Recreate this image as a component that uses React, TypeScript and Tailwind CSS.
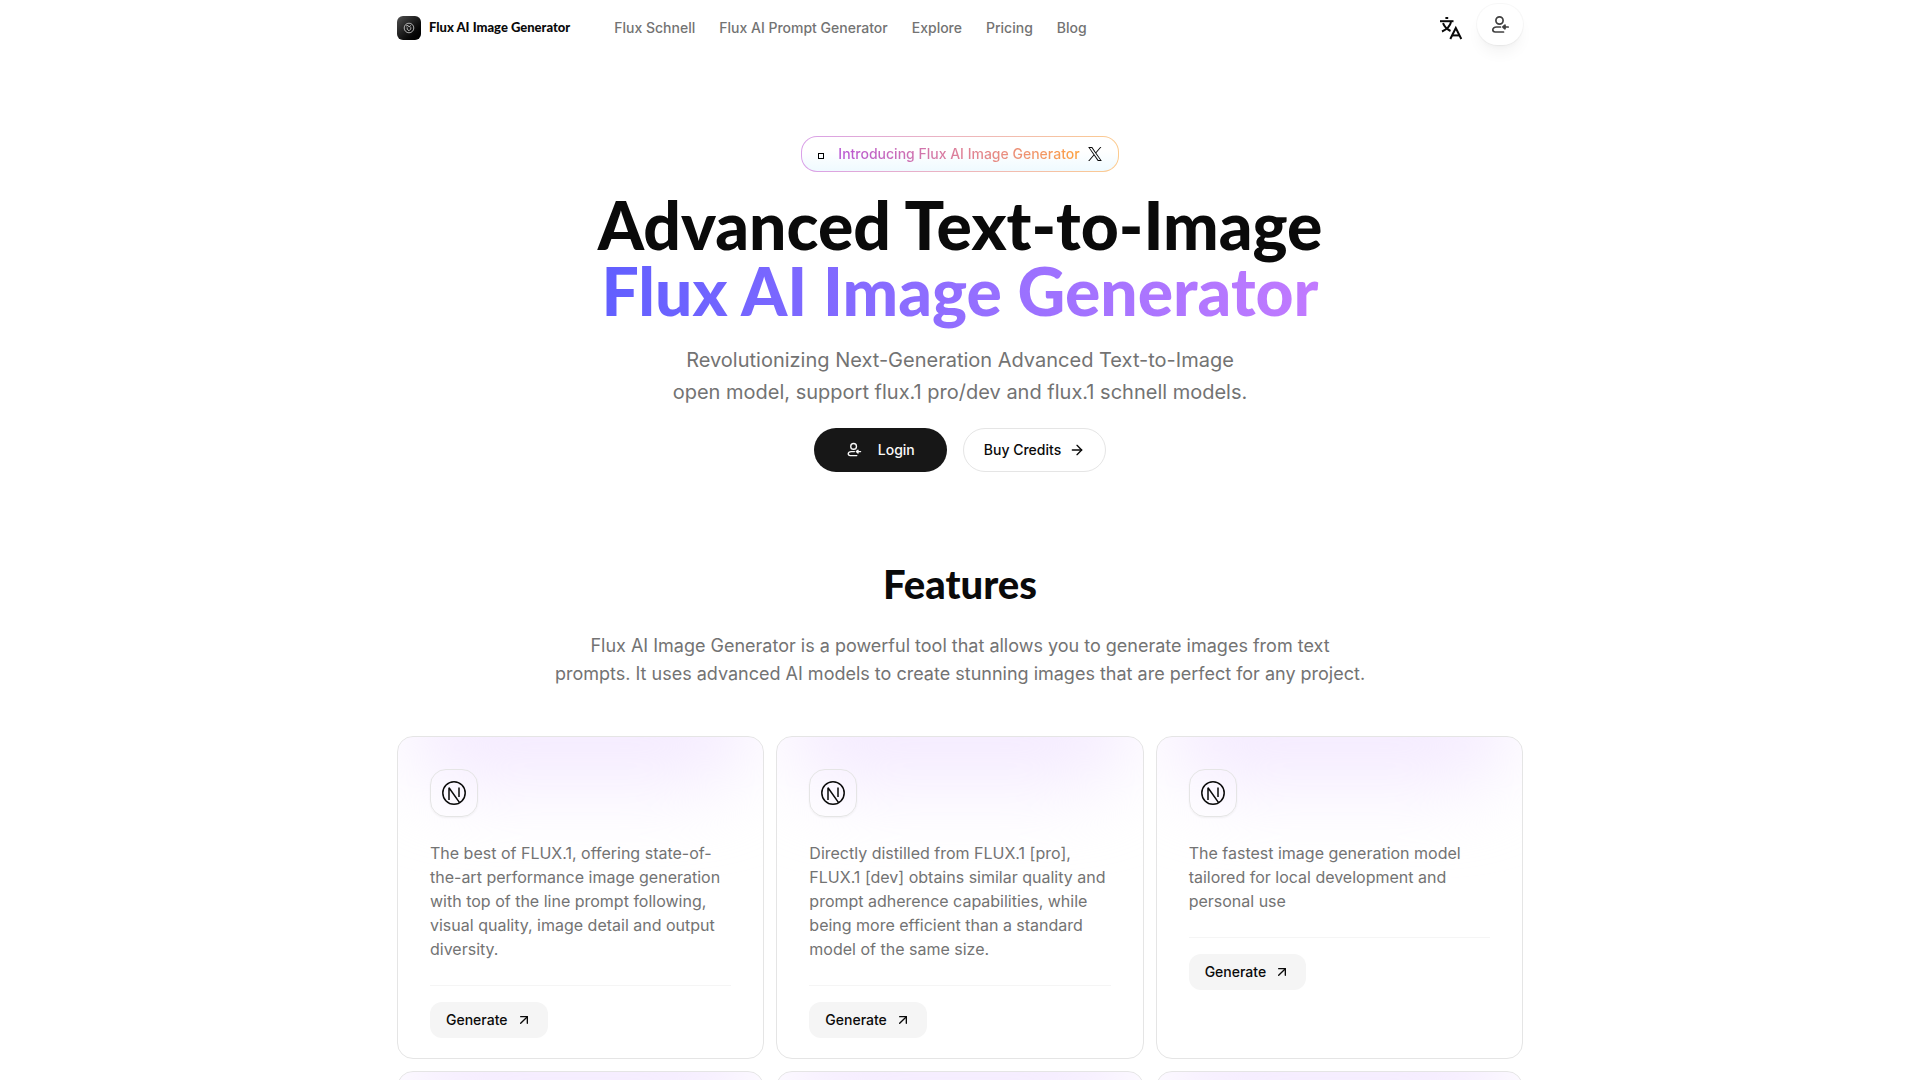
import { ArrowRight, ArrowUpRight } from "lucide-react";

const navLinks = [
  { label: "Flux Schnell", href: "/flux-schnell" },
  { label: "Flux AI Prompt Generator", href: "/flux-ai-prompt-generator" },
  { label: "Explore", href: "/explore" },
  { label: "Pricing", href: "/pricing" },
  { label: "Blog", href: "/blog" },
];

const features = [
  "The best of FLUX.1, offering state-of-the-art performance image generation with top of the line prompt following, visual quality, image detail and output diversity.",
  "Directly distilled from FLUX.1 [pro], FLUX.1 [dev] obtains similar quality and prompt adherence capabilities, while being more efficient than a standard model of the same size.",
  "The fastest image generation model tailored for local development and personal use",
];

function TranslateIcon({ className }: { className?: string }) {
  return (
    <svg viewBox="0 0 24 24" fill="none" stroke="currentColor" strokeWidth="2" className={className} aria-hidden="true">
      <path d="M1 5.2H14.5" />
      <path d="M6.4 2H9.2" />
      <path d="M4 7.2C5.5 11 8.5 13.5 11.5 15" />
      <path d="M12 6C11 10.5 7.5 13.5 3 15.5" />
      <path d="M11.3 23L16.8 12L22.3 23" />
      <path d="M13.2 19.4H20.4" />
    </svg>
  );
}

function LoginIcon({ className }: { className?: string }) {
  return (
    <svg viewBox="0 0 20 20" fill="none" stroke="currentColor" strokeWidth="1.7" strokeLinecap="round" strokeLinejoin="round" className={className} aria-hidden="true">
      <circle cx="9.5" cy="5.5" r="3.6" />
      <path d="M10.5 12H6.5C4.2 12 2.8 13.2 2.8 14.8C2.8 16.3 3.8 17 5.2 17H13.5" />
      <path d="M18.2 12H14" />
      <path d="M15 10.2L12.9 12L15 13.8Z" fill="currentColor" />
    </svg>
  );
}

function NextIcon({ className }: { className?: string }) {
  return (
    <svg viewBox="0 0 24 24" fill="none" stroke="currentColor" strokeWidth="1.5" className={className} aria-hidden="true">
      <circle cx="12" cy="12" r="11.2" />
      <path d="M7 19V6.8L17.4 21.4" strokeLinejoin="bevel" />
      <path d="M17 6.5V16" />
    </svg>
  );
}

function XIcon({ className }: { className?: string }) {
  return (
    <svg viewBox="0 0 1200 1227" fill="currentColor" className={className} aria-hidden="true">
      <path d="M714.163 519.284L1160.89 0H1055.03L667.137 450.887L357.328 0H0L468.492 681.821L0 1226.37H105.866L515.491 750.218L842.672 1226.37H1200L714.137 519.284H714.163ZM569.165 687.828L521.697 619.934L144.011 79.6944H306.615L611.412 515.685L658.88 583.579L1055.08 1150.3H892.476L569.165 687.854V687.828Z" />
    </svg>
  );
}

function Logo() {
  return (
    <span className="flex size-6 items-center justify-center rounded-md bg-linear-to-br from-neutral-600 to-black">
      <svg viewBox="0 0 12 12" fill="none" stroke="#d4d4d4" strokeWidth="0.8" className="size-3" aria-hidden="true">
        <circle cx="6" cy="6" r="4.8" />
        <path d="M3 4L5 3.4L6 5L8 3.4M4.2 5.4V7.2L6 8.8L7.8 7V5.2" />
      </svg>
    </span>
  );
}

function Header() {
  return (
    <header className="flex h-14 items-center">
      <a href="/" className="flex items-center gap-2 font-['Lato','Inter',sans-serif] text-[13px] font-black">
        <Logo />
        Flux AI Image Generator
      </a>
      <nav className="ml-11 flex items-center gap-6 text-sm font-medium text-neutral-500">
        {navLinks.map((link) => (
          <a key={link.href} href={link.href}>{link.label}</a>
        ))}
      </nav>
      <div className="ml-auto flex h-14 items-start gap-3.5">
        <button type="button" aria-label="Change language" className="flex h-14 items-center">
          <TranslateIcon className="size-6" />
        </button>
        <button type="button" aria-label="Account" className="mt-1 flex h-[41px] w-[46px] items-center justify-center rounded-full bg-white text-neutral-700 shadow-lg ring-1 shadow-black/5 ring-black/3">
          <LoginIcon className="size-5" />
        </button>
      </div>
    </header>
  );
}

function Hero() {
  return (
    <section className="flex flex-col items-center pt-20 text-center">
      <a href="https://x.com" className="rounded-2xl bg-linear-to-r from-[#d9a0e8] via-[#edb5bd] to-[#fccb8f] p-px">
        <span className="flex h-[34px] items-center rounded-[15px] bg-linear-to-b from-white from-40% to-[#effaff] px-4">
          <span className="mt-1 size-[6px] border border-black" />
          <span className="ml-3.5 bg-linear-to-r from-[#b854d4] via-[#dd7f98] to-[#fda13c] bg-clip-text text-sm font-medium text-transparent">
            Introducing Flux AI Image Generator
          </span>
          <XIcon className="ml-2 size-[14px]" />
        </span>
      </a>
      <h1 className="mt-5 font-['Lato','Inter',sans-serif] text-[66px] leading-[66px] font-black">
        <span className="block">Advanced Text-to-Image</span>
        <span className="inline-block bg-linear-to-r from-indigo-500 to-purple-400 bg-clip-text pb-3 text-transparent">
          Flux AI Image Generator
        </span>
      </h1>
      <p className="mt-2 text-xl leading-8 text-neutral-500">
        Revolutionizing Next-Generation Advanced Text-to-Image
        <br />
        open model, support flux.1 pro/dev and flux.1 schnell models.
      </p>
      <div className="mt-5 flex gap-4 text-sm font-medium">
        <button type="button" className="flex h-11 items-center gap-4 rounded-full bg-neutral-900 px-8 text-neutral-50">
          <LoginIcon className="size-4" />
          Login
        </button>
        <a href="/pricing" className="flex h-11 items-center gap-2 rounded-full border border-neutral-200 px-5">
          Buy Credits
          <ArrowRight className="size-4" />
        </a>
      </div>
    </section>
  );
}

function FeatureCard({ text }: { text?: string }) {
  return (
    <article className="relative min-h-80 overflow-hidden rounded-2xl border border-neutral-200 px-8 pt-8 pb-5">
      <div className="absolute inset-x-2 -top-16 h-28 rounded-full bg-purple-100/90 blur-2xl" />
      {text && (
        <div className="relative">
          <div className="flex size-12 items-center justify-center rounded-2xl border border-neutral-200 shadow-xs">
            <NextIcon className="size-6" />
          </div>
          <p className="mt-6 text-base text-neutral-500">{text}</p>
          <div className="mt-6 border-t border-neutral-100 pt-4">
            <a href="/flux-schnell" className="inline-flex h-9 items-center gap-2 rounded-xl bg-neutral-100 px-4 text-sm font-medium">
              Generate
              <ArrowUpRight className="size-4" />
            </a>
          </div>
        </div>
      )}
    </article>
  );
}

function Features() {
  return (
    <section className="pt-20">
      <div className="text-center">
        <h2 className="font-['Lato','Inter',sans-serif] text-[40px] leading-[64px] font-black">Features</h2>
        <p className="mx-auto mt-4 max-w-4xl text-lg leading-7 text-neutral-500">
          Flux AI Image Generator is a powerful tool that allows you to generate images from text
          <br />
          prompts. It uses advanced AI models to create stunning images that are perfect for any project.
        </p>
      </div>
      <div className="mt-12 grid grid-cols-3 gap-3">
        {features.map((text) => (
          <FeatureCard key={text} text={text} />
        ))}
        <FeatureCard />
        <FeatureCard />
        <FeatureCard />
      </div>
    </section>
  );
}

export default function App() {
  return (
    <div className="h-screen overflow-hidden bg-white px-6 font-['Inter',sans-serif] text-neutral-950">
      <div className="mx-auto max-w-[1126px]">
        <Header />
        <main>
          <Hero />
          <Features />
        </main>
      </div>
    </div>
  );
}
